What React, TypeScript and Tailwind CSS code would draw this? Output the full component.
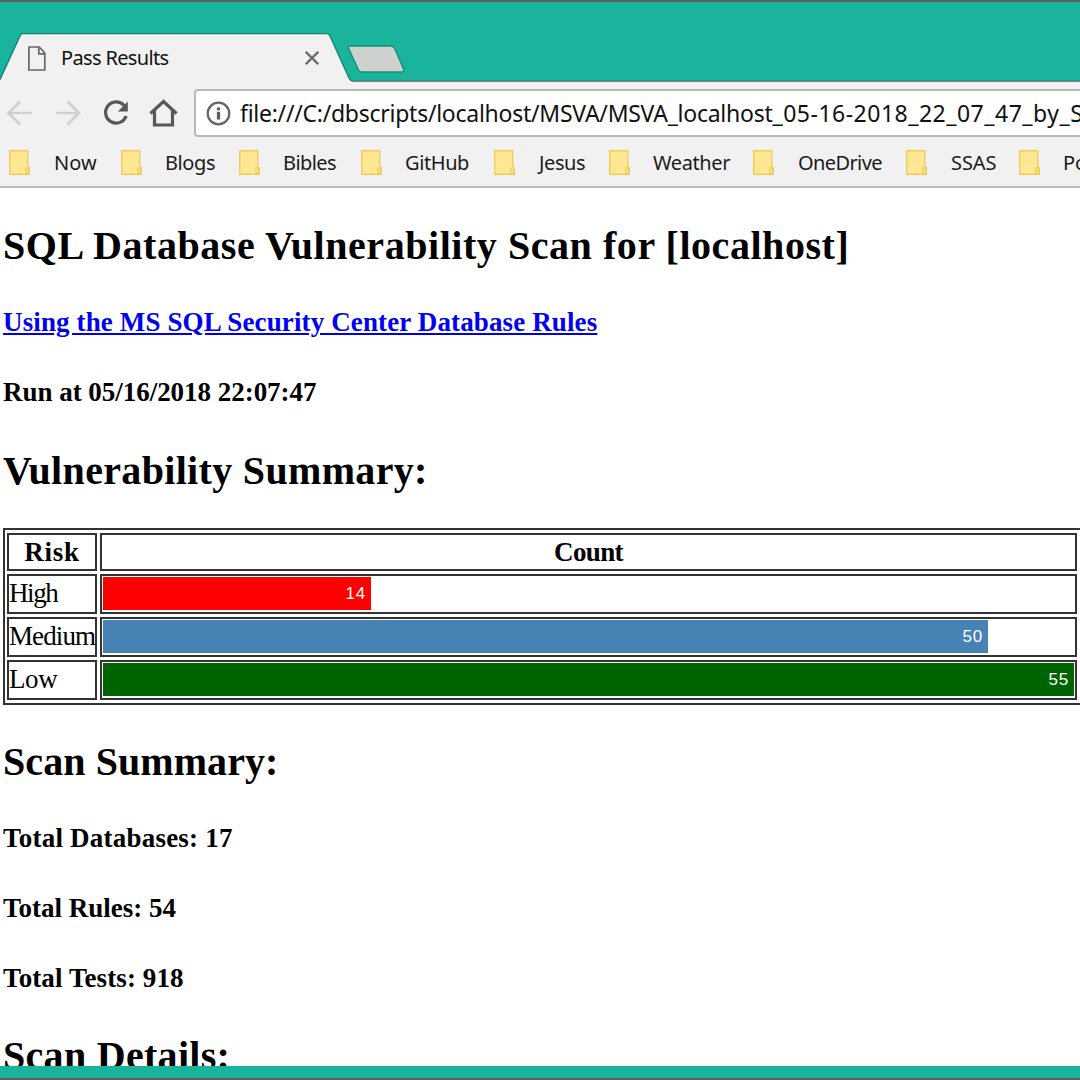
import React from "react";

const FolderIcon = () => (
  <svg width="21" height="25" viewBox="0 0 21 25" className="block shrink-0">
    <path d="M.75.75h18v17h1.5v6.500H.75z" fill="#ffe793" stroke="#efcb58" strokeWidth="1.300" />
    <path d="M17 23.500v-5.500h2.800v5.500z" fill="#ffe793" stroke="#efcb58" strokeWidth="1.200" />
  </svg>
);

const bookmarks = [
  { label: "Now", cell: "w-[112px]", text: "tracking-[0.1px]" },
  { label: "Blogs", cell: "w-[118px]", text: "-ml-px tracking-[-0.4px]" },
  { label: "Bibles", cell: "w-[122px]", text: "-ml-px tracking-[-0.6px]" },
  { label: "GitHub", cell: "w-[133px]", text: "-ml-px tracking-[-0.4px]" },
  { label: "Jesus", cell: "w-[115px]", text: "tracking-[-0.4px]" },
  { label: "Weather", cell: "w-[144px]", text: "-ml-px tracking-[-0.4px]" },
  { label: "OneDrive", cell: "w-[153px]", text: "tracking-[-0.6px]" },
  { label: "SSAS", cell: "w-[113px]", text: "tracking-[-0.1px]" },
  { label: "Power BI", cell: "w-[140px]", text: "-ml-px tracking-[0px]" },
];

const risks = [
  { name: "High", count: 14, bar: "w-[268px] bg-[#ff0000] pr-[5px]", track: "tracking-[-1.4px]" },
  { name: "Medium", count: 50, bar: "w-[885px] bg-[#4682b4] pr-[5px]", track: "tracking-[-0.9px]" },
  { name: "Low", count: 55, bar: "w-[971px] bg-[#006400] pr-[5px]", track: "tracking-[-0.4px]" },
];

const H2 = ({ children, className = "" }: { children: React.ReactNode; className?: string }) => (
  <h2 className={`h-10 shrink-0 text-[40px] leading-10 font-bold ${className}`}>{children}</h2>
);

const H4 = ({ children, className = "" }: { children: React.ReactNode; className?: string }) => (
  <h4 className={`h-8 shrink-0 text-[27px] leading-8 font-bold ${className}`}>{children}</h4>
);

function TabStrip() {
  return (
    <div className="h-[82px] shrink-0 border-t-2 border-[#5a6066] bg-[#1ab39c]">
      <div className="relative h-[80px]">
        <svg width="1080" height="80" viewBox="0 2 1080 80" className="absolute inset-0">
          <path d="M0 80.500L20 36Q21 33.700 23 33.700H327Q329 33.700 330 36L349 78Q350.500 81 353 81H1080V82H0z" fill="#f1f1f1" />
          <path d="M0 79.500L20 36Q21 33.700 23 33.700H327Q329 33.700 330 36L349 78Q350.500 81 353 81H1080" fill="none" stroke="#12806f" strokeWidth="1.300" />
          <path d="M352 81.200H1080" stroke="#6f8984" strokeWidth="1.400" />
          <path d="M350 46H391Q393.500 46 394.500 48L403.500 69Q404.500 72 402 72H361.500Q359.500 72 358.500 70L348.500 48Q348 46 350 46z" fill="#cfd1ce" stroke="#168e7c" strokeWidth="1.400" />
        </svg>
        <div className="relative flex h-full items-center pt-[33px] pl-7">
          <svg width="18" height="25" viewBox="0 0 18 25" className="mb-px shrink-0" fill="none" stroke="#6b6666" strokeWidth="1.700">
            <path d="M.9 1h10.400l5.500 6v17H.9z" />
            <path d="M10.800 1v6.800h6" />
          </svg>
          <span className="mb-[2px] ml-[15px] w-[244px] text-[20px] tracking-[-0.65px] whitespace-nowrap text-[#111]">Pass Results</span>
          <svg width="14" height="14" viewBox="0 0 14 14" className="mb-px" stroke="#6b6b6b" strokeWidth="2.300">
            <path d="M.8.8l12.400 12.400M13.200.8L.8 13.200" />
          </svg>
        </div>
      </div>
    </div>
  );
}

function Toolbar() {
  return (
    <div className="flex h-[55px] shrink-0 items-start bg-[#f1f1f1] pt-[7px]">
      <svg width="194" height="48" viewBox="0 89 194 48" className="shrink-0" fill="none">
        <path d="M32 113H9M20 101.500L8.500 113L20 124.500M56 113H79M67.500 101.500L79 113L67.500 124.500" stroke="#cfd1ce" strokeWidth="2.700" />
        <path d="M124 105.300A10.600 10.600 0 1 0 126.200 116" stroke="#5a5656" strokeWidth="3.200" />
        <path d="M127.800 101.500V111.500H117.800z" fill="#5a5656" />
        <path d="M150.500 113.500L163.500 101.500L176.500 113.500M154.500 111V125H172.500V111" stroke="#5a5656" strokeWidth="3.200" />
      </svg>
      <div className="flex h-[48px] w-[900px] shrink-0 items-center rounded-[4px] border-2 border-[#b9b9b9] bg-white pl-[10px]">
        <svg width="25" height="25" viewBox="0 0 25 25" className="shrink-0" fill="none">
          <circle cx="12.500" cy="12.500" r="10.800" stroke="#5f6668" strokeWidth="2.200" />
          <path d="M12.500 10.800V18.500M12.500 6.500V9.300" stroke="#5f5a5a" strokeWidth="3.200" />
        </svg>
        <span className="ml-[9px] text-[23px] tracking-[-0.26px] whitespace-nowrap text-[#111]">
          file:///C:/dbscripts/localhost/MSVA/MSVA_localhost
          <span className="tracking-[0.5px]">_05-16-2018_22_07_47_by_S</span>
        </span>
      </div>
    </div>
  );
}

function BookmarkBar() {
  return (
    <div className="flex h-[51px] shrink-0 items-center overflow-hidden border-b-2 border-[#bcbcbc] bg-[#f1f1f1] pt-[2px] pl-[9px] text-[20px] text-[#1a1a1a]">
      {bookmarks.map((b) => (
        <div key={b.label} className={`flex shrink-0 items-center gap-[24px] ${b.cell}`}>
          <FolderIcon />
          <span className={`whitespace-nowrap ${b.text}`}>{b.label}</span>
        </div>
      ))}
    </div>
  );
}

function RiskTable() {
  return (
    <div className="mt-[37px] grid h-[177px] w-[1080px] shrink-0 grid-cols-[90px_977px] grid-rows-[38px_40px_40px_40px] gap-[3px] border-2 border-[#333] p-[3px] pl-[2px] text-[27px]">
      <div className="flex items-center justify-center border-2 border-[#333] font-bold tracking-[0.7px]">Risk</div>
      <div className="flex items-center justify-center border-2 border-[#333] font-bold tracking-[-0.6px]">Count</div>
      {risks.map((r) => (
        <React.Fragment key={r.name}>
          <div className="flex items-center border-2 border-[#333] pb-px">
            <span className={r.track}>{r.name}</span>
          </div>
          <div className="flex items-center border-2 border-[#333] pb-px pl-px">
            <div className={`flex h-[33px] items-center justify-end font-['Liberation_Sans',sans-serif] text-[17px] tracking-[0.8px] text-white ${r.bar}`}>{r.count}</div>
          </div>
        </React.Fragment>
      ))}
    </div>
  );
}

export default function App() {
  return (
    <div className="flex h-[1080px] w-[1080px] flex-col overflow-hidden bg-white font-['Noto_Sans',sans-serif]">
      <TabStrip />
      <Toolbar />
      <BookmarkBar />
      <main className="flex min-h-0 flex-1 flex-col overflow-hidden pt-[38px] pl-[3px] font-['Liberation_Serif',serif] whitespace-nowrap text-black">
        <H2 className="tracking-[0.55px]">SQL Database Vulnerability Scan for [localhost]</H2>
        <H4 className="mt-10 tracking-[0.13px]">
          <a className="text-[#0000ee] underline">Using the MS SQL Security Center Database Rules</a>
        </H4>
        <H4 className="mt-[38px] tracking-[-0.03px]">Run at 05/16/2018 22:07:47</H4>
        <H2 className="mt-[43px] tracking-[0.33px]">Vulnerability Summary:</H2>
        <RiskTable />
        <H2 className="mt-[37px] tracking-[0.08px]">Scan Summary:</H2>
        <H4 className="mt-10 tracking-[0.22px]">Total Databases: 17</H4>
        <H4 className="mt-[38px]">Total Rules: 54</H4>
        <H4 className="mt-[38px] tracking-[0.1px]">Total Tests: 918</H4>
        <H2 className="mt-[42px] tracking-[0.3px]">Scan Details:</H2>
      </main>
      <footer className="h-[14px] shrink-0 border-b-2 border-[#5a6066] bg-[#1ab39c]" />
    </div>
  );
}
